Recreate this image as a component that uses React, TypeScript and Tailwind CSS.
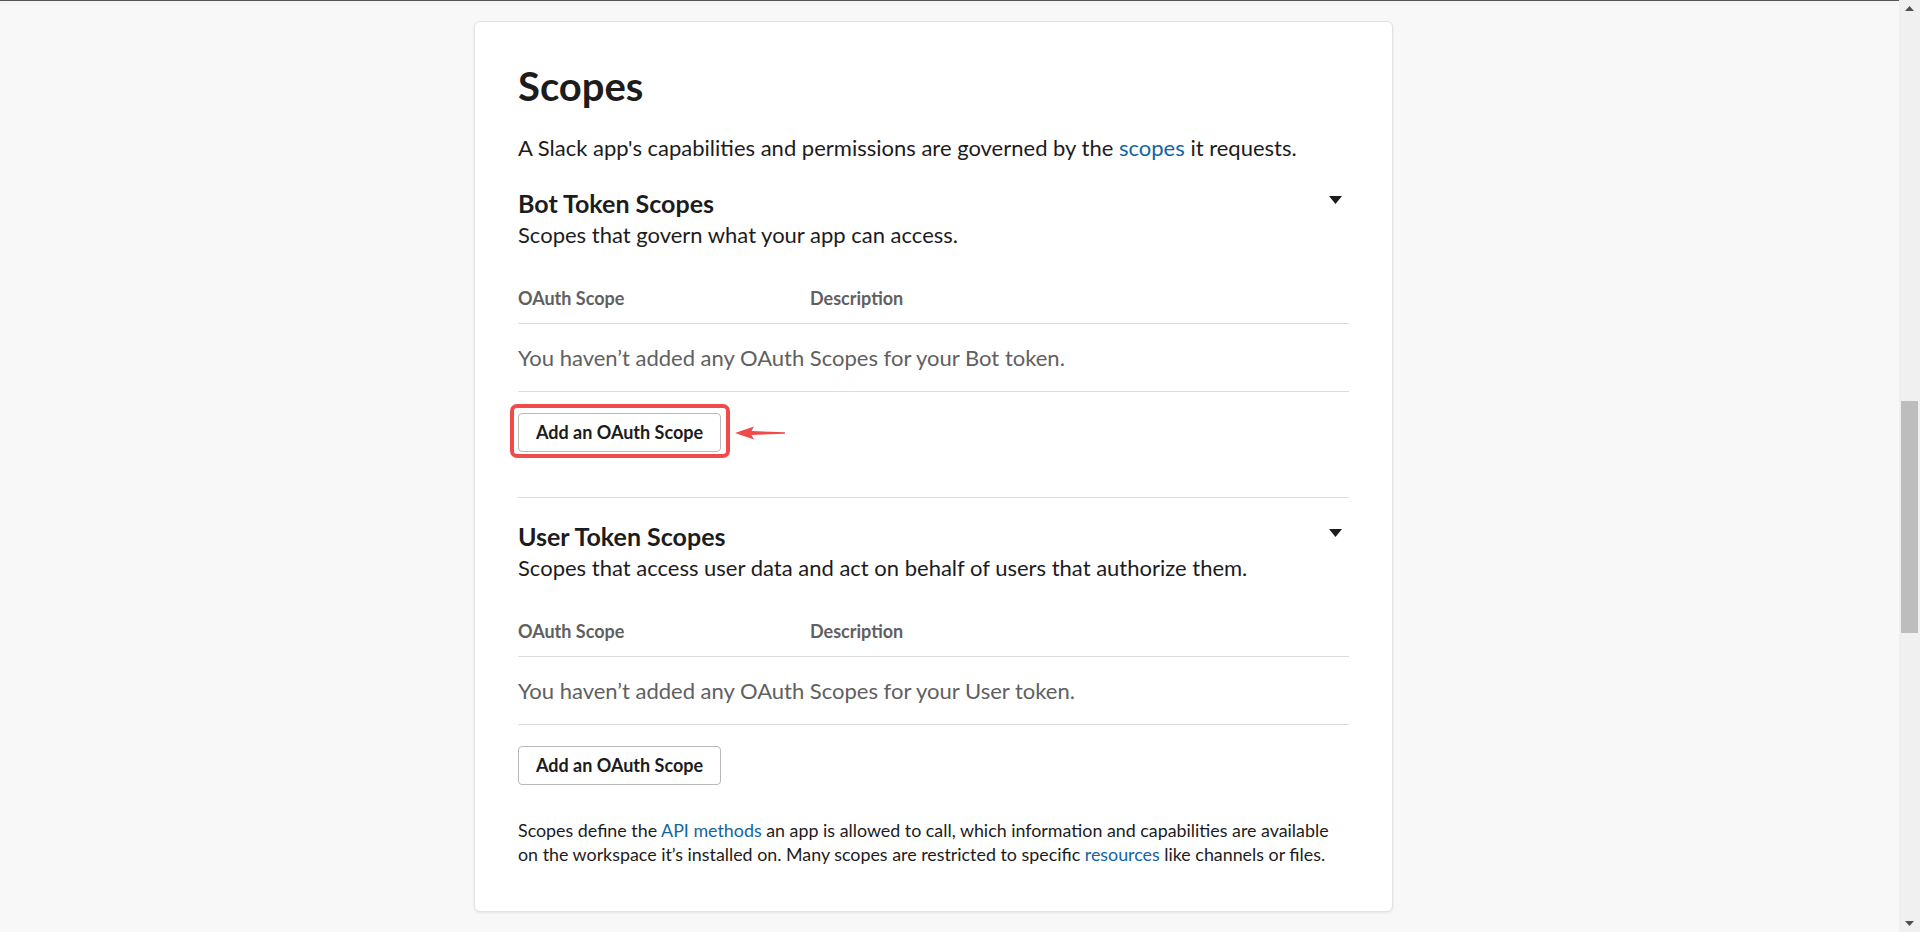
import React from "react";

function Caret() {
  return (
    <svg width="13" height="8" viewBox="0 0 13 8" className="mt-[9px] mr-[7px] shrink-0">
      <polygon points="0,0 13,0 6.5,8" fill="#1d1c1d" />
    </svg>
  );
}

function PointerArrow() {
  return (
    <svg width="50" height="14" viewBox="0 0 50 14" className="absolute left-[calc(100%+14px)] top-[13px]">
      <polygon points="0,7 19,0.5 16.5,5 50,6.2 50,7.8 16.5,9 19,13.5" fill="#f04b4b" />
    </svg>
  );
}

function ScopeSection({ title, subtitle, token, highlight }: { title: string; subtitle: string; token: string; highlight?: boolean }) {
  return (
    <section>
      <div className="flex items-start justify-between">
        <h2 className="text-[25px] leading-[32px] font-bold text-[#1d1c1d]">{title}</h2>
        <Caret />
      </div>
      <p className="text-[22px] leading-[32px] text-[#1d1c1d]">{subtitle}</p>

      <div className="mt-[35px] grid grid-cols-[292px_1fr] border-b border-[#dddddd] pb-[13px] text-[18px] leading-[24px] font-bold text-[#616061]">
        <span>OAuth Scope</span>
        <span>Description</span>
      </div>
      <div className="border-b border-[#dddddd] pt-[18px] pb-[17px] text-[22px] leading-[32px] text-[#616061]">
        You haven’t added any OAuth Scopes for your {token} token.
      </div>

      <div className="mt-[21px] flex">
        <div className="relative">
          <button className="h-[39px] rounded-[4px] border border-[#b9b9b9] bg-white px-[17px] text-[18px] font-bold text-[#1d1c1d]">
            Add an OAuth Scope
          </button>
          {highlight && (
            <>
              <div className="pointer-events-none absolute top-[-9px] bottom-[-6px] left-[-8px] right-[-9px] rounded-[7px] border-4 border-[#f04b4b]" />
              <PointerArrow />
            </>
          )}
        </div>
      </div>
    </section>
  );
}

function Scrollbar() {
  return (
    <div className="flex h-full w-[21px] shrink-0 flex-col items-center bg-[#f0f0f0]">
      <div className="flex h-[17px] w-full items-center justify-center">
        <svg width="9" height="5" viewBox="0 0 9 5"><polygon points="0,5 9,5 4.5,0" fill="#505050" /></svg>
      </div>
      <div className="mt-[384px] h-[232px] w-[17px] bg-[#bdbdbd]" />
      <div className="flex-1" />
      <div className="flex h-[17px] w-full items-center justify-center">
        <svg width="9" height="5" viewBox="0 0 9 5"><polygon points="0,0 9,0 4.5,5" fill="#505050" /></svg>
      </div>
    </div>
  );
}

export default function App() {
  return (
    <div className="flex h-[932px] w-full overflow-hidden bg-[#f8f8f8] font-['Lato',sans-serif]">
      <main className="relative flex-1">
        <div className="absolute inset-x-0 top-0 h-px bg-[#555555] shadow-[0_1px_5px_rgba(0,0,0,0.12)]" />
        <div className="ml-[474px] mt-[21px] w-[919px] rounded-[6px] border border-[#e2e2e2] bg-white px-[43px] pt-[40px] pb-[45px] shadow-[0_1px_3px_rgba(0,0,0,0.08)]">
          <h1 className="text-[40px] leading-[48px] font-bold text-[#1d1c1d]">Scopes</h1>
          <p className="mt-[22px] text-[22px] leading-[32px] text-[#1d1c1d]">
            A Slack app's capabilities and permissions are governed by the{" "}
            <a href="#" className="text-[#1264a3]">scopes</a> it requests.
          </p>

          <div className="mt-[23px] border-b border-[#dddddd] pb-[45px]">
            <ScopeSection
              title="Bot Token Scopes"
              subtitle="Scopes that govern what your app can access."
              token="Bot"
              highlight
            />
          </div>

          <div className="pt-[22px]">
            <ScopeSection
              title="User Token Scopes"
              subtitle="Scopes that access user data and act on behalf of users that authorize them."
              token="User"
            />
          </div>

          <p className="mt-[33px] text-[17.85px] leading-[24px] text-[#1d1c1d]">
            Scopes define the <a href="#" className="text-[#1264a3]">API methods</a> an app is allowed to call, which information and capabilities are available on the workspace it’s installed on. Many scopes are restricted to specific{" "}
            <a href="#" className="text-[#1264a3]">resources</a> like channels or files.
          </p>
        </div>
      </main>
      <Scrollbar />
    </div>
  );
}
